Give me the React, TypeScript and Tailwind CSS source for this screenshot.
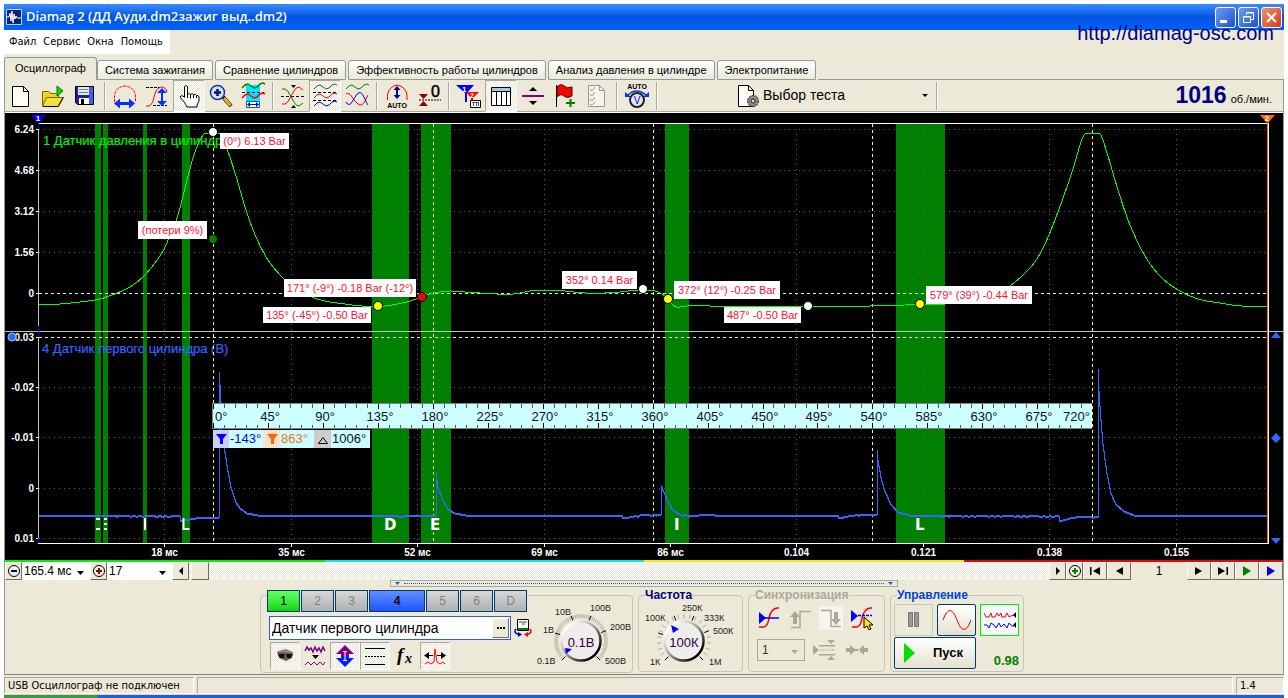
import clsx from "clsx";
import { useState, type ReactNode } from "react";

type Pt = [number, number];

const DITHER = "bg-[repeating-conic-gradient(#ffffff_0_25%,#ece9d8_0_50%)] bg-[length:2px_2px]";

const TABS = [
  "Осциллограф",
  "Система зажигания",
  "Сравнение цилиндров",
  "Эффективность работы цилиндров",
  "Анализ давления в цилиндре",
  "Электропитание",
];

const BANDS: Pt[] = [
  [95, 6],
  [103, 5],
  [143, 4],
  [182, 8],
  [372, 37],
  [421, 30],
  [665, 24],
  [896, 49],
];

const TIMES: [number, string][] = [
  [164.5, "18 мс"],
  [291.5, "35 мс"],
  [417.5, "52 мс"],
  [544.5, "69 мс"],
  [670.5, "86 мс"],
  [796.5, "0.104"],
  [923.5, "0.121"],
  [1049.5, "0.138"],
  [1176.5, "0.155"],
];

const LEVELS: [number, string][] = [
  [129.5, "6.24"],
  [170.5, "4.68"],
  [211.5, "3.12"],
  [252.5, "1.56"],
  [293.5, "0"],
  [337.5, "0.03"],
  [387.5, "-0.02"],
  [437.5, "-0.01"],
  [488.5, "0"],
  [538.5, "0.01"],
];

const DEAD_CENTRES = [213.5, 433.5, 653.5, 872.5, 1092.5];

// x, y, width, height, text
const CALLOUTS: [number, number, number, number, string][] = [
  [220, 133, 69, 16, "(0°) 6.13 Bar"],
  [138, 221, 69, 18, "(потери 9%)"],
  [284, 279, 132, 18, "171° (-9°) -0.18 Bar (-12°)"],
  [263, 307, 108, 16, "135° (-45°) -0.50 Bar"],
  [562, 271, 75, 18, "352° 0.14 Bar"],
  [674, 281, 106, 18, "372° (12°) -0.25 Bar"],
  [724, 307, 77, 16, "487° -0.50 Bar"],
  [926, 286, 106, 18, "579° (39°) -0.44 Bar"],
];

const DOTS: [number, number, string][] = [
  [213, 132, "#fff"],
  [213, 239, "#008000"],
  [378, 306, "#ff0"],
  [422, 297, "#f00"],
  [643, 289, "#fff"],
  [668, 299, "#ff0"],
  [808, 306, "#fff"],
  [920, 304, "#ff0"],
];

const PRESSURE: Pt[] = [
  [39, 305], [60, 304], [80, 302], [100, 299], [117, 293], [130, 287], [143, 277], [155, 263],
  [164, 249], [172, 231], [178, 215], [185, 188], [193, 158], [200, 140], [206, 133], [219, 133],
  [227, 149], [236, 176], [246, 210], [256, 237], [268, 260], [283, 278], [300, 291], [314, 298],
  [330, 302], [345, 304], [362, 306], [385, 306], [397, 304], [407, 302], [416, 299], [424, 296],
  [434, 293], [450, 291], [465, 292], [480, 293], [497, 294], [513, 294], [530, 291], [545, 290],
  [565, 291], [585, 293], [605, 293], [620, 292], [638, 290], [655, 291], [662, 294], [668, 299],
  [672, 304], [677, 307], [687, 306], [695, 305], [710, 306], [740, 306], [870, 306], [905, 305],
  [945, 304], [975, 301], [992, 296], [1010, 286], [1031, 267], [1041, 252], [1049, 235], [1058, 212],
  [1073, 169], [1081, 142], [1086, 133], [1099, 133], [1107, 153], [1118, 190], [1130, 225],
  [1145, 256], [1160, 276], [1178, 290], [1198, 299], [1220, 303], [1242, 306], [1268, 306],
];

const SYNC: Pt[] = [
  [39, 515], [100, 515], [180, 516], [181, 521], [186, 519], [200, 517], [219, 517], [219, 372],
  [220, 385], [221, 402], [222, 430], [225, 452], [228, 471], [231, 487], [236, 502], [240, 508],
  [247, 513], [258, 515], [398, 515], [399, 517], [408, 515], [436, 515], [436, 472], [438, 487],
  [442, 498], [448, 509], [455, 513], [466, 515], [622, 515], [623, 518], [640, 515], [661, 514],
  [661, 485], [664, 492], [668, 501], [673, 510], [680, 514], [695, 516], [703, 514], [715, 515],
  [838, 515], [839, 518], [848, 516], [862, 514], [877, 514], [877, 450], [878, 460], [881, 477],
  [885, 491], [891, 504], [898, 512], [910, 515], [1059, 516], [1060, 521], [1070, 518], [1082, 516],
  [1098, 517], [1098, 369], [1099, 391], [1101, 420], [1103, 444], [1107, 473], [1111, 493],
  [1116, 504], [1124, 511], [1134, 515], [1268, 515],
];

function smooth(pts: Pt[]) {
  const slope = (i: number) => {
    const a = pts[i - 1];
    const c = pts[i + 1];
    if (!a || !c || a[1] === pts[i][1] || c[1] === pts[i][1]) return 0;
    return (c[1] - a[1]) / (c[0] - a[0]);
  };
  let d = `M${pts[0][0]} ${pts[0][1]}`;
  for (let i = 0; i < pts.length - 1; i++) {
    const [x0, y0] = pts[i];
    const [x1, y1] = pts[i + 1];
    const h = (x1 - x0) / 3;
    d += `C${x0 + h} ${y0 + slope(i) * h} ${x1 - h} ${y1 - slope(i + 1) * h} ${x1} ${y1}`;
  }
  return d;
}

// adds the one pixel ripple of the sensor on the long quiet stretches
function noisy(pts: Pt[], shift: number) {
  let d = `M${pts[0][0]} ${pts[0][1] + shift}`;
  for (let i = 1; i < pts.length; i++) {
    const [x0, y0] = pts[i - 1];
    const [x1, y1] = pts[i];
    if (x1 - x0 > 12) {
      for (let x = x0 + 3; x < x1; x += 2) {
        const n = (x * 7919) % 13;
        d += `L${x} ${y0 + shift + ((y1 - y0) * (x - x0)) / (x1 - x0) + (n < 3 ? 1 : 0)}`;
      }
    }
    d += `L${x1} ${y1 + shift}`;
  }
  return d;
}

function Ruler() {
  const ticks = Array.from({ length: 80 }, (_, i) => i);
  const marks = Array.from({ length: 17 }, (_, i) => i);
  return (
    <g>
      <rect x="213" y="403" width="879" height="26" fill="#ccffff" />
      <path d="M212.5 403.5H1092M212.5 428.5H1092M212.5 403V429" stroke="#808080" />
      {ticks.map((i) => {
        const x = Math.round(213 + i * 10.99) + 0.5;
        const major = i % 5 === 0;
        return (
          <path
            key={i}
            d={major ? `M${x} 404v5M${x} 423v5` : `M${x} 404v4M${x} 425v3`}
            stroke={major ? "#000" : "#555"}
          />
        );
      })}
      <g fontSize="13" fill="#101020">
        {marks.map((i) => (
          <text
            key={i}
            x={i === 0 ? 215 : i === 16 ? 1090 : Math.round(215 + i * 54.95)}
            y="421"
            textAnchor={i === 0 ? "start" : i === 16 ? "end" : "middle"}
          >
            {i * 45}°
          </text>
        ))}
      </g>
      <g fontSize="13">
        <rect x="213" y="430" width="157" height="18" fill="#ccffff" />
        <rect x="213" y="430" width="16" height="18" fill="#ccccff" />
        <rect x="263" y="430" width="17" height="18" fill="#ffe0cc" />
        <rect x="314" y="430" width="17" height="18" fill="#cccccc" />
        <path d="M216 434h11l-4 5v5h-3v-5z" fill="#00f" />
        <path d="M267 434h11l-4 5v5h-3v-5z" fill="#f60" />
        <path d="M318.5 443.5h9l-4.5-6z" fill="none" stroke="#000" />
        <text x="230" y="443" fill="#0000ff">-143°</text>
        <text x="281" y="443" fill="#f07020">863°</text>
        <text x="332" y="443" fill="#101020">1006°</text>
      </g>
    </g>
  );
}

function Chart() {
  return (
    <svg
      viewBox="5 113 1278 447"
      className="block h-auto w-full bg-black"
      fontFamily='"Liberation Sans", Arial, sans-serif'
      role="img"
      aria-label="Осциллограмма"
    >
      <g fill="#008000">
        {BANDS.map(([x, w]) => (
          <rect key={x} x={x} y="124" width={w} height="419" />
        ))}
      </g>
      <g shapeRendering="crispEdges" strokeWidth="1" fill="none">
        {TIMES.map(([x]) => (
          <path key={x} d={`M${x} 129V543`} stroke="#5c5c5c" strokeDasharray="1 4" />
        ))}
        {LEVELS.map(([y]) => (
          <path
            key={y}
            d={`M39 ${y}H1267`}
            stroke={y === 293.5 || y === 337.5 ? "#e8e8e8" : "#5c5c5c"}
            strokeDasharray={y === 293.5 || y === 337.5 ? "3 3" : "1 4"}
          />
        ))}
        {LEVELS.map(([y]) => (
          <path key={y} d={`M36 ${y}h3`} stroke="#fff" />
        ))}
        {TIMES.map(([x]) => (
          <path key={x} d={`M${x} 543v4`} stroke="#fff" />
        ))}
        <path d="M5 331.5H1283" stroke="#c0c0c0" />
      </g>

      <g fontSize="13" strokeWidth="0.2">
        <text x="43" y="145" fill="#00f000" stroke="#00f000">1 Датчик давления в цилиндр</text>
        <text x="42" y="353" fill="#3366ff" stroke="#3366ff">4 Датчик первого цилиндра (В)</text>
      </g>

      <g shapeRendering="crispEdges" fill="none">
        {DEAD_CENTRES.map((x) => (
          <path key={x} d={`M${x} 124V543`} stroke="#ffff33" strokeDasharray="3 3" />
        ))}
        <path d={smooth(PRESSURE)} stroke="#00ff00" strokeWidth="1" />
        <path d={noisy(SYNC, 0) + noisy(SYNC, 1)} stroke="#3366ff" strokeLinejoin="bevel" />
        <path d="M38.5 123V543" stroke="#c0c0c0" />
        <path d="M38 123.5H1268M38 543.5H1268M1268.5 123V544" stroke="#fff" />
        <path d="M1267.5 120V543" stroke="#ff6600" />
        <path d="M38.5 120v9M38.5 326v11M38.5 538v5" stroke="#0000ff" />
      </g>

      <Ruler />

      <g fill="#fff">
        <path d="M96 518h4v2h-4zM96 528h4v2h-4zM104 518h3v2h-3zM104 523h3v2h-3zM104 528h3v2h-3zM144 518h2v12h-2z" />
        <g fontSize="15" fontWeight="bold" fontFamily='"DejaVu Sans", Verdana, sans-serif'>
          <text x="384" y="530">D</text>
          <text x="430" y="530">E</text>
          <text x="674" y="530">I</text>
          <text x="915" y="530">L</text>
          <path d="M182.5 518h2v10h5v2h-7z" />
        </g>
      </g>

      {DOTS.map(([x, y, fill]) => (
        <circle key={x + y} cx={x} cy={y} r="4.5" fill={fill} stroke="#000" />
      ))}
      {CALLOUTS.map(([x, y, w, h, text]) => (
        <g key={text}>
          <rect x={x} y={y} width={w} height={h} fill="#fff" />
          <text x={x + w / 2} y={y + h / 2 + 4} fontSize="11" textAnchor="middle" fill="#ff1030">
            {text}
          </text>
        </g>
      ))}

      <g fontSize="10" fill="#fff" fontWeight="bold">
        {LEVELS.map(([y, label]) => (
          <text key={y} x="34" y={y + 3} textAnchor="end">
            {label}
          </text>
        ))}
        {TIMES.map(([x, label]) => (
          <text key={x} x={x} y="556" textAnchor="middle">
            {label}
          </text>
        ))}
      </g>

      <path d="M31 115h15l-7 8h-1z" fill="#0000ff" />
      <path d="M1260 115h15l-7 8h-1z" fill="#ff6600" />
      <g fontSize="8" fontWeight="bold" fill="#fff" textAnchor="middle">
        <text x="38" y="121">1</text>
        <text x="1267" y="121">2</text>
      </g>
      <g fill="#3366ff">
        <circle cx="12" cy="337" r="4" stroke="#99bbff" />
        <path d="M1276 332l5 6h-10zM1276 433l5 5-5 5-5-5zM1271 538h10l-5 6z" />
      </g>
    </svg>
  );
}

function Icon({ children }: { children: ReactNode }) {
  return (
    <svg viewBox="0 0 28 28" className="h-7 w-7 shrink-0" fill="none" aria-hidden="true">
      {children}
    </svg>
  );
}

function ToolButton({ label, pressed, children }: { label: string; pressed?: boolean; children: ReactNode }) {
  return (
    <button
      type="button"
      aria-label={label}
      className={clsx(
        "flex h-8 w-8 items-center justify-center",
        pressed && "border border-[#aca899] border-r-white border-b-white",
        pressed && DITHER,
      )}
    >
      <Icon>{children}</Icon>
    </button>
  );
}

function Sep() {
  return <div className="mx-[3px] h-7 w-[2px] border-l border-[#aca899] bg-white" />;
}

const wave = (y: number) => `M3 ${y + 2}l3-3 3-1 3 2 3 2 3-1 3-3 3-1 2 1`;

function Toolbar() {
  return (
    <div className="flex h-8 items-center border-b border-[#aca899]">
      <ToolButton label="Новый">
        <path d="M5.5 4.5h11l5 5v15h-16z" fill="#fffef5" stroke="#000" />
        <path d="M16.5 4.5v5h5" stroke="#000" />
      </ToolButton>
      <ToolButton label="Открыть">
        <path d="M3.5 23.5v-14h6l2 2h8v4" fill="#e8d820" stroke="#806000" />
        <path d="M3.5 24.5l4-9h17l-5 9z" fill="#f0e040" stroke="#806000" />
        <path d="M4 24.5h15l5-9" stroke="#000" />
        <path d="M18 4l6 5-6 5z" fill="#00e000" stroke="#008000" />
      </ToolButton>
      <ToolButton label="Сохранить">
        <path d="M4.5 4.5h18v18h-16l-2-2z" fill="#2020a0" stroke="#000" />
        <path d="M7 5h11v8H7z" fill="#dfe8ff" />
        <path d="M8 7.5h9M8 10.5h9" stroke="#808080" />
        <path d="M18 5h4v17h-4z" fill="#3a60e8" />
        <path d="M8 16h10v6H8z" fill="#fff" />
        <path d="M10 17h3v5h-3z" fill="#000" />
      </ToolButton>
      <Sep />
      <ToolButton label="Период">
        <path d="M3.5 20V14q1-9 10.5-10 9.500 1 10.500 10v6" stroke="#f00" strokeDasharray="3 1" />
        <path d="M3 21.5l6-5v3.500h9v-3.500l6 5-6 5V23H9v3.500z" fill="#0033ff" />
      </ToolButton>
      <ToolButton label="Амплитуда">
        <path d="M3 5.5h14M10 23.5h14" stroke="#000" strokeDasharray="3 1" />
        <path d="M3 24h3q4-2 5-9 2-9 7-10 5 0 6 5" stroke="#f00" />
        <path d="M19 6l5 5h-4v8h4l-5 5-5-5h4v-8h-4z" fill="#0033ff" />
      </ToolButton>
      <ToolButton label="Рука" pressed>
        <path
          d="M9.500 4.500q2-2 3 0v8q2-2 3 0 2-1.500 3 0 2-1 3 1 2-.5 2.500 1.500v4q-1 2-2 4v2h-10l-2-4-5-6q1-2 3-1l1.500 1.500z"
          fill="#fff"
          stroke="#000"
        />
        <path d="M12.5 12v4M15.5 12.5v4M18.5 13v3M21.5 14v2" stroke="#000" />
      </ToolButton>
      <ToolButton label="Масштаб">
        <path d="M16 15l8 9" stroke="#000" strokeWidth="4" />
        <path d="M17 16l6.500 7.500" stroke="#e8b020" strokeWidth="3" />
        <circle cx="10.5" cy="10.5" r="7" fill="#cfe6ff" stroke="#2030a0" strokeWidth="1.5" />
        <path d="M7 10.5h7M10.5 7v7" stroke="#101070" strokeWidth="2.5" />
      </ToolButton>
      <ToolButton label="Участок">
        <path d="M7 3h14v16H7z" fill="#00e5ff" />
        <path d="M7.5 19.5h13v6h-13z" fill="#fff" stroke="#0060c0" />
        <path d={wave(4)} stroke="#008000" strokeWidth="1.5" />
        <path d="M3 10.5h22" stroke="#000" strokeDasharray="3 2" />
        <path d={wave(14)} stroke="#f00" strokeWidth="1.5" />
        <path d="M8 22.5l3-2.500v2h6v-2l3 2.500-3 2.500v-2h-6v2z" fill="#00f" />
      </ToolButton>
      <Sep />
      <ToolButton label="Наложение">
        <path d="M2 14.5h24" stroke="#000" strokeDasharray="3 2" />
        <path d="M3 7h3q3 1 5 6l4 7q2 4 5 4l4-3" stroke="#008000" />
        <path d="M3 22h3q3-1 5-6l4-7q2-4 5-4l4 3" stroke="#f00" />
        <path d="M12 3h5l-2.500 3zM12 26h5l-2.500-3z" fill="#000" />
      </ToolButton>
      <ToolButton label="Раздельно" pressed>
        <path d={wave(5)} stroke="#008000" />
        <path d="M2 10.5h24M2 18.5h24" stroke="#000" strokeDasharray="3 2" />
        <path d={wave(14)} stroke="#f00" />
        <path d={wave(22)} stroke="#00f" />
      </ToolButton>
      <ToolButton label="Попарно">
        <path d={wave(5)} stroke="#008000" />
        <path d="M3 12q3-2 6 3t6 7q4 3 7-3l3-6" stroke="#f00" />
        <path d="M3 20q3 5 6 0t5-8q4-4 7 3t4 8" stroke="#00f" />
      </ToolButton>
      <Sep />
      <ToolButton label="Авто масштаб">
        <path d="M4.5 18v-5q1-8 9.500-10 9 2 10 10v5" stroke="#f00" />
        <path d="M14 4l3.500 4H15v5h2.500L14 17l-3.500-4H13V8h-2.500z" fill="#0000a0" />
        <text x="14" y="26" fontSize="7" fontWeight="bold" textAnchor="middle" fill="#000" fontFamily="Liberation Sans">
          AUTO
        </text>
      </ToolButton>
      <ToolButton label="Обнулить">
        <path d="M4 12h9l-4.500 5zM4 24h9l-4.500-5z" fill="#900" />
        <path d="M4 18h22" stroke="#000" strokeDasharray="2 1" />
        <text x="16" y="15" fontSize="16" fill="#000" stroke="#000" strokeWidth="0.5" fontFamily="Liberation Sans">
          0
        </text>
      </ToolButton>
      <Sep />
      <ToolButton label="Маркеры">
        <path d="M1 3h18l-7 8v9h-2v-9z" fill="#00f" />
        <path d="M11 10h13l-6 6v9h-2v-9z" fill="#f00" />
        <text x="7" y="10" fontSize="8" fontWeight="bold" fill="#fff" fontFamily="Liberation Sans">1</text>
        <text x="15" y="16" fontSize="7" fontWeight="bold" fill="#fff" fontFamily="Liberation Sans">2</text>
        <path d="M15.5 18.5h10v7h-10z" fill="#fff" stroke="#000" />
        <path d="M17 20.5h7M18.5 20v4M21.5 20v4M23.5 20v4" stroke="#555" />
      </ToolButton>
      <ToolButton label="Таблица" pressed>
        <path d="M4.5 5.5h19v18h-19z" fill="#fff" stroke="#000" />
        <path d="M5 6h18v3H5z" fill="#a0c8f0" />
        <path d="M5 9.5h18M9.5 10v13M14.5 10v13M19.5 10v13" stroke="#000" />
      </ToolButton>
      <ToolButton label="Разделитель">
        <path d="M3 14h22" stroke="#800080" strokeWidth="2" />
        <path d="M10 9h8l-4-4zM10 19h8l-4 4z" fill="#000" />
      </ToolButton>
      <ToolButton label="Флаг">
        <path d="M5.5 3v22" stroke="#000" />
        <path d="M6 5q4-4 7-1 3 3 8 1v9q-5 3-8 0-3-3-7 1z" fill="#f00" stroke="#400" />
        <path d="M15 21h9M19.5 17v8" stroke="#008000" strokeWidth="2" />
      </ToolButton>
      <ToolButton label="Список">
        <path d="M5.5 3.5h11l5 5v16h-16z" fill="#f6f4ea" stroke="#999" />
        <path d="M16.5 3.5v5h5M7 7l2 2 3-4M7 12l2 2 3-4M7 17l2 2 3-4M7 22l2 1 3-3" stroke="#999" />
      </ToolButton>
      <Sep />
      <ToolButton label="Авто вольт">
        <text x="14" y="7" fontSize="7" fontWeight="bold" textAnchor="middle" fill="#000" fontFamily="Liberation Sans">
          AUTO
        </text>
        <circle cx="14" cy="18" r="7" fill="#e8e8e8" stroke="#222" strokeWidth="2" />
        <path d="M5 13q8-8 18 0" stroke="#03f" strokeWidth="1.5" />
        <path d="M2 10v5h6zM26 10v5h-6z" fill="#03f" />
        <text x="14" y="22" fontSize="10" textAnchor="middle" fill="#00f" fontFamily="Liberation Sans">V</text>
      </ToolButton>
      <Sep />
      <button type="button" className="ml-[74px] flex h-8 w-[198px] items-center text-[14px]">
        <Icon>
          <path d="M3.5 3.5h10l5 5v16h-15z" fill="#fffef5" stroke="#000" />
          <path d="M13.5 3.5v5h5" stroke="#000" />
          <circle cx="18" cy="19" r="5.5" fill="#888" stroke="#222" strokeDasharray="2 1" />
          <circle cx="18" cy="19" r="2" fill="#ddd" stroke="#222" />
        </Icon>
        <span className="grow text-left">Выбор теста</span>
        <svg viewBox="0 0 9 9" className="mr-1 h-[9px] w-[9px]" aria-hidden="true">
          <path d="M2 3h6l-3 3z" />
        </svg>
      </button>
      <Sep />
      <div className="flex grow items-baseline justify-end gap-1 pr-[11px]">
        <span className="text-[23px] font-bold text-[#000080]">1016</span>
        <span className="text-[11px]">об./мин.</span>
      </div>
    </div>
  );
}

const RAISED = "border border-white border-r-[#716f64] border-b-[#716f64] bg-[#ece9d8]";

function NavButton({ label, wide, fill, d }: { label: string; wide?: boolean; fill?: string; d: string }) {
  return (
    <button
      type="button"
      aria-label={label}
      className={clsx("flex h-[18px] items-center justify-center", RAISED, wide ? "w-6" : "w-[17px]")}
    >
      <svg viewBox="0 0 12 12" className="h-3 w-3" fill={fill ?? "#000"} aria-hidden="true">
        <path d={d} />
      </svg>
    </button>
  );
}

function RoundButton({ label, color, plus }: { label: string; color: string; plus?: boolean }) {
  return (
    <button type="button" aria-label={label} className={clsx("flex h-[18px] w-[17px] items-center justify-center", RAISED)}>
      <svg viewBox="0 0 14 14" className="h-[14px] w-[14px] shrink-0" fill="none" aria-hidden="true">
        <circle cx="7" cy="7" r="5.5" fill="#f4f2e8" stroke="#000" />
        <path d={plus ? "M4 7h6M7 4v6" : "M4 7h6"} stroke={color} strokeWidth="2" />
      </svg>
    </button>
  );
}

function Combo({ label, value, className }: { label: string; value: string; className: string }) {
  return (
    <div className={clsx("relative", className)}>
      <select aria-label={label} className="h-full w-full appearance-none bg-transparent pl-[2px] text-xs">
        <option>{value}</option>
      </select>
      <svg viewBox="0 0 7 4" className="pointer-events-none absolute top-1/2 right-[6px] h-1 w-[7px]" aria-hidden="true">
        <path d="M0 0h7l-3.500 4z" />
      </svg>
    </div>
  );
}

function NavRow() {
  return (
    <>
      <div className="flex h-[2px] bg-white">
        <div className="grow bg-[#00f000]" />
        <div className="grow bg-[#00e8e8]" />
        <div className="grow bg-[#f0f000]" />
        <div className="grow bg-[#f00000]" />
      </div>
      <div className="flex h-[18px] items-stretch">
        <RoundButton label="Сжать" color="#000080" />
        <Combo label="Развёртка" value="165.4 мс" className="w-[68px] bg-white" />
        <RoundButton label="Растянуть" color="#900000" plus />
        <Combo label="Кадр" value="17" className="w-[65px] bg-white" />
        <NavButton label="Влево" d="M8 2v8L4 6z" />
        <div className={clsx("flex grow", DITHER)}>
          <div className={clsx("ml-[2px] w-[18px]", RAISED)} />
        </div>
        <NavButton label="Вправо" d="M4 2v8l4-4z" />
        <RoundButton label="Добавить" color="#008000" plus />
        <NavButton label="В начало" wide d="M1 2h1.500v8H1zM11 2v8L4 6z" />
        <NavButton label="Назад" wide d="M10 2v8L3 6z" />
        <output className="w-14 text-center text-xs leading-[18px]">1</output>
        <NavButton label="Вперёд" wide d="M2 2v8l7-4z" />
        <NavButton label="В конец" wide d="M1 2v8l7-4zM9.500 2H11v8H9.500z" />
        <NavButton label="Старт" wide d="M2 1v10l8-5z" fill="#008000" />
        <NavButton label="Запись" wide d="M2 1v10l8-5z" fill="#0000ff" />
      </div>
      <div className="mx-auto flex h-[7px] w-[508px] items-center justify-between border border-[#aca899] px-1">
        <svg viewBox="0 0 5 3" className="h-[3px] w-[5px]" fill="#1c5fd0" aria-hidden="true">
          <path d="M0 0h5l-2.500 3z" />
        </svg>
        <div className="mx-1 grow border-t border-dotted border-[#1c5fd0]" />
        <svg viewBox="0 0 5 3" className="h-[3px] w-[5px]" fill="#1c5fd0" aria-hidden="true">
          <path d="M0 0h5l-2.500 3z" />
        </svg>
      </div>
    </>
  );
}

type KnobLabel = [number, number, string];

function Knob({ id, value, cx, cy, arrow, labels, fine }: {
  id: string;
  value: string;
  cx: number;
  cy: number;
  arrow: string;
  labels: KnobLabel[];
  fine?: boolean;
}) {
  const count = fine ? 60 : 20;
  const ticks = Array.from({ length: count + 1 }, (_, i) => ((135 + (270 * i) / count) * Math.PI) / 180);
  const at = (a: number, r: number) => `${cx + Math.cos(a) * r} ${cy + Math.sin(a) * r}`;
  const main = [0, 4.6, 8.4, 11.6, 15, 20].map((n) => ((135 + 13.5 * n) * Math.PI) / 180);
  return (
    <svg
      viewBox="0 0 100 72"
      className="h-[72px] w-[100px]"
      fontFamily='"Liberation Sans", Arial, sans-serif'
      role="img"
      aria-label={value}
    >
      <defs>
        <linearGradient id={id} x1="0" y1="0" x2="1" y2="1">
          <stop offset="0.15" stopColor="#fff" />
          <stop offset="0.5" stopColor="#999" />
          <stop offset="0.85" stopColor="#000" />
        </linearGradient>
      </defs>
      <path d={ticks.map((a) => `M${at(a, 23)}L${at(a, 27)}`).join("")} stroke="#aca899" />
      <path d={main.map((a) => `M${at(a, 22)}L${at(a, 27)}`).join("")} stroke="#000" />
      <circle cx={cx} cy={cy} r="19.5" fill="#f0eeea" stroke={`url(#${id})`} strokeWidth="2.5" />
      <path d={arrow} fill="#00f" />
      <text x={cx} y={cy + 6} fontSize="13" textAnchor="middle" fill="#300048">
        {value}
      </text>
      <g fontSize="9" fill="#222">
        {labels.map(([x, y, text]) => (
          <text key={text} x={x} y={y}>
            {text}
          </text>
        ))}
      </g>
    </svg>
  );
}

function SmallButton({ label, pressed, children }: { label: string; pressed?: boolean; children: ReactNode }) {
  return (
    <button
      type="button"
      aria-label={label}
      className={clsx(
        "flex h-7 w-[30px] items-center justify-center",
        pressed && "border border-[#aca899] border-r-white border-b-white",
        pressed && DITHER,
      )}
    >
      <svg viewBox="0 0 24 24" className="h-6 w-6 shrink-0" fill="none" aria-hidden="true">
        {children}
      </svg>
    </button>
  );
}

function Channels() {
  const [name, setName] = useState("Датчик первого цилиндра");
  return (
    <div className="mt-[7px] flex h-[78px] w-[373px] rounded border border-[#c9c5b2]">
      <div className="-mt-[6px] flex flex-col pl-[6px]">
        <div className="flex gap-px">
          {["1", "2", "3", "4", "5", "6", "D"].map((c) => (
            <button
              key={c}
              type="button"
              className={clsx(
                "h-[22px] border border-[#003c74] text-xs",
                c === "4" ? "w-14" : "w-[33px]",
                c === "1" && "bg-gradient-to-b from-[#60ff60] to-[#00d800]",
                c === "4" && "bg-gradient-to-b from-[#6090ff] to-[#2050ff] font-bold",
                c !== "1" && c !== "4" && "bg-gradient-to-b from-[#d8d8d8] to-[#b0b0b0] text-[#808080]",
              )}
            >
              {c}
            </button>
          ))}
        </div>
        <div className="mt-1 flex items-center gap-[3px] pl-[2px]">
          <div className="flex h-6 w-[242px] items-center border border-[#2c5fd8] bg-white pr-px">
            <input
              aria-label="Название канала"
              className="h-full min-w-0 grow bg-transparent pl-[2px] text-[14px]"
              value={name}
              onChange={(e) => setName(e.target.value)}
            />
            <button type="button" aria-label="Выбрать датчик" className={clsx("flex h-5 w-[17px] items-center justify-center gap-px", RAISED)}>
              <span className="size-[2px] bg-black" />
              <span className="size-[2px] bg-black" />
              <span className="size-[2px] bg-black" />
            </button>
          </div>
          <svg viewBox="0 0 18 18" className="size-[18px]" fill="none" aria-hidden="true">
            <path d="M3.5.5h11v11h-11z" fill="#fff" stroke="#000" />
            <path d="M5 3h8M8 5h3" stroke="#444" />
            <path d="M4 9h10v2H4z" fill="#008000" />
            <path d="M2 10q-3 4 3 5.500" stroke="#00a" strokeWidth="1.500" />
            <path d="M4 13v5l4-2.500z" fill="#00a" />
            <path d="M16 10q3 4-3 5.500" stroke="#f00" strokeWidth="1.500" />
            <path d="M14 13v5l-4-2.500z" fill="#f00" />
          </svg>
        </div>
        <div className="mt-[2px] flex pl-[3px]">
          <SmallButton label="Просмотр" pressed>
            <path d="M5 7l8-2 7 3v4H5z" fill="#888" />
            <path d="M4 8l16 1-1 5-6 3-7-3z" fill="#6b5a50" />
            <path d="M5 10h7l-1 4H7zM13 10h6l-1 4h-4z" fill="#111" />
            <path d="M11 12h3" stroke="#c33" />
          </SmallButton>
          <SmallButton label="Фильтр">
            <path d="M2 7l2-4 2 3 2-2 2 4 2-5 2 4 2-3 2 4 2-5 2 4" stroke="#800080" strokeWidth="1.5" />
            <path d="M9 11h7l-3.500 4z" fill="#000" />
            <path d="M2 21l3-3 3 3 3-3 3 3 3-3 3 3 2-3" stroke="#800080" />
          </SmallButton>
          <SmallButton label="Инверсия" pressed>
            <path d="M12 1l9 9h-5v2H8v-2H3z" fill="#800080" />
            <path d="M12 23l9-9h-5v-2H8v2H3z" fill="#0020ff" />
            <path d="M12 7v10M10 7.5h4M10 16.5h4" stroke="#fff" />
          </SmallButton>
          <SmallButton label="Уровни" pressed>
            <path d="M2 4.5h20M2 20.5h20" stroke="#000" />
            <path d="M2 12.5h20" stroke="#000" strokeDasharray="2 1" />
          </SmallButton>
          <SmallButton label="Формула">
            <text x="4" y="17" fontSize="19" fontStyle="italic" fontWeight="bold" fill="#000" fontFamily="Liberation Serif">
              f
            </text>
            <text x="12" y="19" fontSize="14" fontStyle="italic" fontWeight="bold" fill="#000" fontFamily="Liberation Serif">
              x
            </text>
          </SmallButton>
          <SmallButton label="Сдвиг" pressed>
            <path d="M2 20l3-2 3 2 3-2 1-13 2 13 3 2 3-2 2 2" stroke="#f00" />
            <path d="M10 11.5H4M14 11.5h6" stroke="#000" />
            <path d="M1 11.5l5-3.500v7zM23 11.5L18 8v7z" fill="#000" />
          </SmallButton>
        </div>
      </div>
      <Knob
        id="volt"
        value="0.1В"
        cx={49}
        cy={45}
        fine
        arrow="M33 52l7 1-6 5z"
        labels={[[5, 68, "0.1В"], [11, 37, "1В"], [23, 19, "10В"], [58, 15, "100В"], [78, 34, "200В"], [73, 68, "500В"]]}
      />
    </div>
  );
}

function Group({ title, className, legend, children }: { title: string; className: string; legend: string; children: ReactNode }) {
  return (
    <fieldset className={clsx("h-[84px] rounded border border-[#c9c5b2]", className)}>
      <legend className={clsx("ml-[6px] text-xs leading-[14px] font-bold", legend)}>{title}</legend>
      {children}
    </fieldset>
  );
}

function PlainButton({ label, children }: { label: string; children: ReactNode }) {
  return (
    <button type="button" aria-label={label} className="flex size-[26px] items-center justify-center">
      <svg viewBox="0 0 24 24" className="size-6" fill="none" aria-hidden="true">
        {children}
      </svg>
    </button>
  );
}

function SyncGroup() {
  return (
    <Group title="Синхронизация" className="w-[137px]" legend="text-[#aca899]">
      <div className="grid grid-cols-4 pt-[3px] pr-1 pl-[7px]">
        <PlainButton label="Уровень">
          <path d="M2 21h5q4-1 5-9 2-9 8-10h2" stroke="#f00" strokeWidth="1.5" />
          <path d="M2 12h20" stroke="#00f" strokeWidth="1.5" />
          <path d="M2 6v12l7-6z" fill="#00f" />
        </PlainButton>
        <PlainButton label="По фронту">
          <path d="M3 21.5h9v-16h11" stroke="#aca899" strokeWidth="1.5" />
          <path d="M7 5l5 6H9v7H5v-7H2z" fill="#aca899" />
        </PlainButton>
        <PlainButton label="По спаду">
          <path d="M0 0h24v24H0z" fill="#f6f4ec" />
          <path d="M2 4.5h10v16h10" stroke="#aca899" strokeWidth="1.5" />
          <path d="M17 19l5-6h-3V6h-4v7h-3z" fill="#aca899" />
        </PlainButton>
        <PlainButton label="Выбор уровня">
          <path d="M2 21h5q4-1 5-9 2-9 8-10h2" stroke="#f00" strokeWidth="1.5" />
          <path d="M8 9.5h14" stroke="#00f" strokeWidth="1.5" strokeDasharray="3 1" />
          <path d="M1 4v12l7-6z" fill="#00f" />
          <path d="M14 11v11l3-2 2 4 2-1-2-4h4z" fill="#ffe600" stroke="#000" />
        </PlainButton>
      </div>
      <div className="mt-2 flex items-center gap-2 pl-2">
        <Combo label="Канал синхронизации" value="1" className="h-[22px] w-12 border border-[#aca899] pl-[2px] text-[#333] [&_svg]:fill-[#aca899]" />
        <svg viewBox="0 0 24 20" className="h-5 w-6" fill="#aca899" aria-hidden="true">
          <path d="M0 5v10l6-5zM14 0h8l-4 4zM14 20h8l-4-4zM6 5h16v1.500H6zM6 14h16v1.500H6z" />
          <path d="M7 10h15" stroke="#aca899" strokeDasharray="2 1" />
        </svg>
        <svg viewBox="0 0 24 20" className="h-5 w-6" fill="#aca899" aria-hidden="true">
          <path d="M1 8h4V5l6 5-6 5v-3H1zM23 8h-4V5l-6 5 6 5v-3h4zM9 9h6v2H9z" />
        </svg>
      </div>
    </Group>
  );
}

function ControlGroup() {
  return (
    <Group title="Управление" className="w-[134px]" legend="text-[#0046d5]">
      <div className="grid grid-cols-3 gap-x-1 gap-y-px pt-[2px] pr-1 pl-[3px]">
        <button type="button" aria-label="Пауза" className="flex h-8 items-center justify-center border border-[#c9c7ba] bg-[#ece9d8]">
          <svg viewBox="0 0 12 16" className="h-4 w-3" fill="#999" stroke="#777" aria-hidden="true">
            <path d="M.5.5h4v14h-4zM6.5.5h4v14h-4z" />
          </svg>
        </button>
        <button type="button" aria-label="Одна развёртка" className="flex h-8 items-center justify-center rounded-xs border border-[#003c74] bg-gradient-to-b from-white to-[#e4e1d0]">
          <svg viewBox="0 0 30 22" className="h-[22px] w-[30px]" fill="none" stroke="#f00" aria-hidden="true">
            <path d="M1 11Q8-8 15 11t14 0" />
          </svg>
        </button>
        <button type="button" aria-label="Непрерывно" className="flex h-8 items-center justify-center border border-[#00f000] bg-[#f8f8fa]">
          <svg viewBox="0 0 34 22" className="h-[22px] w-[34px]" fill="none" aria-hidden="true">
            <path d="M1 4l2 4h3l2-4 1 4h3l2-4 2 3 2-3 1 4h3l2-4 2 4 2-1 3-1" stroke="#f00" />
            <path d="M1 16h3l2 3 2-5 3 2 2 3 3-5 2 4 3-3 3 4 2-5 3 3h2" stroke="#00f" />
            <path d="M33 3v6l-3-3zM33 13v6l-3-3z" fill="#003" />
          </svg>
        </button>
        <button type="button" className="col-span-2 flex h-8 items-center gap-[18px] rounded-xs border border-[#003c74] bg-gradient-to-b from-white to-[#e4e1d0] pl-[9px] text-[13px] font-bold">
          <svg viewBox="0 0 11 20" className="h-5 w-[11px]" aria-hidden="true">
            <path d="M0 0v20l11-10z" fill="#00e000" />
          </svg>
          Пуск
        </button>
        <output className="self-end text-right text-[13px] leading-4 font-bold text-[#008000]">0.98</output>
      </div>
    </Group>
  );
}

function TitleBar() {
  const box = "flex size-[21px] items-center justify-center rounded-[3px] border border-white";
  return (
    <header className="flex h-[26px] items-center gap-1 bg-gradient-to-b from-[#3c8cff] via-[#0054e3] to-[#0062fa] pr-[2px] pl-[2px]">
      <svg viewBox="0 0 16 16" className="size-4" fill="none" aria-hidden="true">
        <path d="M.5.5h15v15H.5z" fill="#0a246a" stroke="#b8d0ff" />
        <path d="M1 8h2l1-4 1 8 1-10 1 12 1-9 1 5 1-3 1 2h4" stroke="#fff" />
      </svg>
      <h1 className='grow font-["Open_Sans",sans-serif] text-[13px] font-semibold text-white'>
        Diamag 2 (ДД Ауди.dm2зажиг выд..dm2)
      </h1>
      <div className="flex gap-[2px]">
        <button type="button" aria-label="Свернуть" className={clsx(box, "bg-gradient-to-br from-[#6f9bf0] to-[#1c4fd0]")}>
          <svg viewBox="0 0 19 19" className="size-[19px]" aria-hidden="true">
            <path d="M4 12h7v3H4z" fill="#fff" />
          </svg>
        </button>
        <button type="button" aria-label="Развернуть" className={clsx(box, "bg-gradient-to-br from-[#6f9bf0] to-[#1c4fd0]")}>
          <svg viewBox="0 0 19 19" className="size-[19px]" fill="none" stroke="#fff" aria-hidden="true">
            <path d="M7.5 7V4.5h7v7H12M7 5h8M4.5 8.5h7v6h-7zM4 9h8" />
          </svg>
        </button>
        <button type="button" aria-label="Закрыть" className={clsx(box, "bg-gradient-to-br from-[#f0906c] to-[#d03810]")}>
          <svg viewBox="0 0 19 19" className="size-[19px]" stroke="#fff" strokeWidth="2" aria-hidden="true">
            <path d="M5 5l9 9M14 5l-9 9" />
          </svg>
        </button>
      </div>
    </header>
  );
}

export default function App() {
  const [tab, setTab] = useState(TABS[0]);
  return (
    <div className='bg-white px-1 pt-1 font-["Liberation_Sans",Arial,sans-serif] text-[11px] text-black'>
      <div className="relative bg-[#ece9d8]">
        <TitleBar />
        <a href="http://diamag-osc.com" className="absolute top-[17px] right-[10px] text-[20px] leading-6 text-[#000080]">
          http://diamag-osc.com
        </a>
        <nav className='flex h-6 w-[166px] items-center gap-[7px] bg-white pl-[5px] font-["DejaVu_Sans_Condensed","DejaVu_Sans",sans-serif]'>
          {["Файл", "Сервис", "Окна", "Помощь"].map((m) => (
            <button key={m} type="button">
              {m}
            </button>
          ))}
        </nav>
        <div role="tablist" className="flex h-[26px] items-end pt-[3px]">
          {TABS.map((t) => (
            <button
              key={t}
              type="button"
              role="tab"
              aria-selected={t === tab}
              onClick={() => setTab(t)}
              className={clsx(
                "rounded-t-[3px] border border-[#919b9c]",
                t === tab
                  ? "h-[23px] border-b-0 bg-[#ece9d8] px-[10px] pb-[2px]"
                  : "mr-[2px] h-5 bg-gradient-to-b from-white to-[#ece9d8] px-[7px]",
              )}
            >
              {t}
            </button>
          ))}
          <div className="grow self-stretch border-b border-[#919b9c]" />
        </div>
        <main className="border-x border-[#919b9c]">
          <Toolbar />
          <div className="h-px bg-white" />
          <Chart />
          <NavRow />
          <div className="flex h-[88px] items-start justify-center gap-[5px] border-b border-[#808080] pt-px pr-1">
            <Channels />
            <Group title="Частота" className="w-[105px]" legend="text-[#000080]">
              <div className="-mt-2">
                <Knob
                  id="freq"
                  value="100К"
                  cx={45}
                  cy={47}
                  arrow="M32 31l8 4-6 4z"
                  labels={[[6, 27, "100К"], [43, 17, "250К"], [65, 27, "333К"], [74, 40, "500К"], [11, 71, "1К"], [70, 71, "1М"]]}
                />
              </div>
            </Group>
            <SyncGroup />
            <ControlGroup />
          </div>
        </main>
        <footer className='mt-[2px] flex h-[17px] gap-[3px] font-["DejaVu_Sans_Condensed","DejaVu_Sans",sans-serif] leading-[15px]'>
          <div className="w-[190px] border border-[#aca899] border-r-white border-b-white pl-[3px]">USB Осциллограф не подключен</div>
          <div className="grow border border-[#aca899] border-r-white border-b-white" />
          <div className="w-12 border border-[#aca899] border-r-white border-b-white pl-[3px]">1.4</div>
        </footer>
        <div className="flex h-1 border-t border-[#d8d4c4] bg-[#245edc]">
          <div className="w-[94px] rounded-tr bg-[#3c9a3c]" />
        </div>
      </div>
    </div>
  );
}
